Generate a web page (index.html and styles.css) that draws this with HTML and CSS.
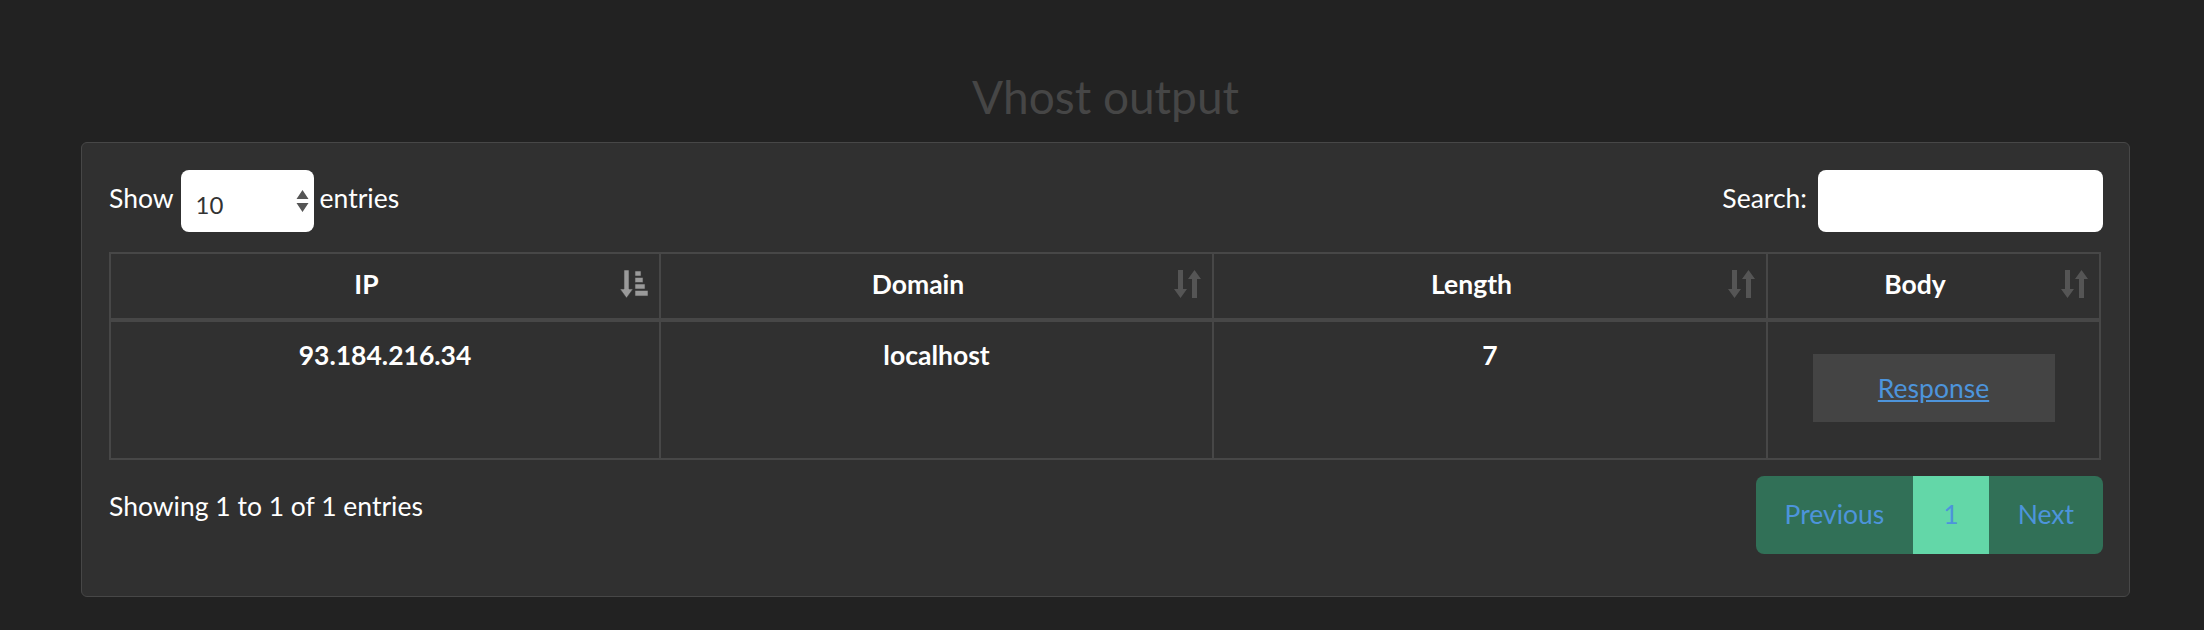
FILE: index.html
```html
<!DOCTYPE html>
<html lang="en">
<head>
<meta charset="utf-8">
<title>Vhost output</title>
<link rel="stylesheet" href="styles.css">
</head>
<body>
  <h1 class="title">Vhost output</h1>
  <div class="panel">
    <div class="controls">
      <div class="length">
        <span class="lbl">Show</span>
        <div class="select">
          <span class="select-val">10</span>
          <svg class="select-arrows" width="13" height="22" viewBox="0 0 13 22"><path d="M6.5 0 L12.5 9 L0.5 9 Z M0.5 13 L12.5 13 L6.5 22 Z" fill="#555"/></svg>
        </div>
        <span class="lbl">entries</span>
      </div>
      <div class="search">
        <span class="lbl">Search:</span>
        <div class="input"></div>
      </div>
    </div>
    <table class="grid">
      <thead>
        <tr>
          <th class="c-ip">IP
            <svg class="sort" width="28" height="28" viewBox="0 0 28 28">
              <g fill="#9a9a9a" stroke="#3a3a3a" stroke-width="0.6">
                <path d="M4 0 H9 V19 H13 L6.5 28 L0 19 H4 Z"/>
                <rect x="15" y="1" width="6" height="5"/>
                <rect x="15" y="7.5" width="8" height="5"/>
                <rect x="15" y="14" width="10" height="5"/>
                <rect x="15" y="20.5" width="13" height="5.5"/>
              </g>
            </svg>
          </th>
          <th class="c-dom">Domain
            <svg class="sort" width="27" height="28" viewBox="0 0 27 28"><g fill="#555"><path d="M4 0 H9 V19 H13 L6.5 28 L0 19 H4 Z"/><path d="M18 28 H23 V9 H27 L20.5 0 L14 9 H18 Z"/></g></svg>
          </th>
          <th class="c-len">Length
            <svg class="sort" width="27" height="28" viewBox="0 0 27 28"><g fill="#555"><path d="M4 0 H9 V19 H13 L6.5 28 L0 19 H4 Z"/><path d="M18 28 H23 V9 H27 L20.5 0 L14 9 H18 Z"/></g></svg>
          </th>
          <th class="c-body">Body
            <svg class="sort" width="27" height="28" viewBox="0 0 27 28"><g fill="#555"><path d="M4 0 H9 V19 H13 L6.5 28 L0 19 H4 Z"/><path d="M18 28 H23 V9 H27 L20.5 0 L14 9 H18 Z"/></g></svg>
          </th>
        </tr>
      </thead>
      <tbody>
        <tr>
          <td>93.184.216.34</td>
          <td>localhost</td>
          <td>7</td>
          <td><div class="resp"><a href="#">Response</a></div></td>
        </tr>
      </tbody>
    </table>
    <div class="footer">
      <div class="info">Showing 1 to 1 of 1 entries</div>
      <div class="pager">
        <a class="page" href="#">Previous</a>
        <a class="page active" href="#">1</a>
        <a class="page" href="#">Next</a>
      </div>
    </div>
  </div>
</body>
</html>
```

FILE: styles.css
```css
html, body {
  margin: 0;
  background: #222222;
}
body {
  padding: 69px 74px 0 81px;
  font-family: Lato, "Open Sans", "Liberation Sans", sans-serif;
  color: #ffffff;
  font-size: 26.5px;
}
.title {
  margin: 0 0 18px;
  font-size: 46px;
  line-height: 55px;
  font-weight: 400;
  color: #464646;
  text-align: center;
}
.panel {
  background: #303030;
  border: 1px solid #474747;
  border-radius: 6px;
  padding: 27px 26px 42px 27px;
}
.controls {
  display: flex;
  justify-content: space-between;
  align-items: center;
  height: 62px;
}
.length, .search {
  display: flex;
  align-items: center;
}
.lbl {
  line-height: 31px;
  padding-bottom: 6px;
}
.select {
  width: 133px;
  height: 62px;
  box-sizing: border-box;
  background: #ffffff;
  border-radius: 8px;
  margin: 0 6px 0 7px;
  display: flex;
  align-items: center;
  justify-content: space-between;
  padding: 0 5px 0 15px;
}
.select-val {
  color: #333;
  font-size: 24px;
  padding-top: 6px;
}
.input {
  width: 285px;
  height: 62px;
  background: #ffffff;
  border-radius: 8px;
  margin-left: 11px;
}
.grid {
  margin-top: 20px;
  width: calc(100% - 2px);
  table-layout: fixed;
  border-collapse: separate;
  border-spacing: 0;
  border-top: 2px solid #474747;
  border-left: 2px solid #474747;
}
.grid th, .grid td {
  box-sizing: border-box;
  border-right: 2px solid #474747;
  border-bottom: 2px solid #474747;
  text-align: center;
  font-weight: 700;
  line-height: 37px;
  vertical-align: top;
}
.grid th {
  position: relative;
  padding: 12px 50px 15px 13px;
  border-bottom-width: 4px;
}
.grid td {
  padding: 15px 13px 15px;
}
.c-ip { width: 550px; }
.c-dom { width: 553px; }
.c-len { width: 554px; }
.c-body { width: 333px; }
.sort {
  position: absolute;
  top: 16px;
  right: 11px;
}
.resp {
  width: 242px;
  height: 68px;
  margin: 17px auto 21px;
  background: #444444;
  display: flex;
  align-items: center;
  justify-content: center;
}
.resp a {
  color: #4d94db;
  font-weight: 400;
  text-decoration: underline;
  line-height: 31px;
}
.footer {
  margin-top: 16px;
  display: flex;
  justify-content: space-between;
  align-items: flex-start;
}
.info {
  padding-top: 12px;
  line-height: 37px;
}
.pager {
  display: flex;
  border-radius: 8px;
  overflow: hidden;
  background: #317057;
}
.page {
  color: #4d94db;
  text-decoration: none;
  line-height: 38px;
  padding: 19px 29px 21px;
}
.page.active {
  background: #63d7a8;
  padding-left: 30px;
  padding-right: 30px;
}
```
